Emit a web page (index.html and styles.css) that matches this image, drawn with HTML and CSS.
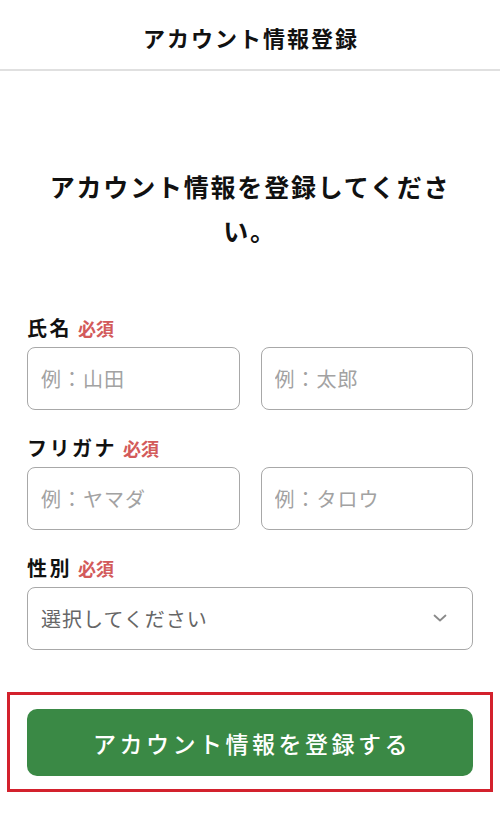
FILE: index.html
```html
<!DOCTYPE html>
<html lang="ja">
<head>
<meta charset="utf-8">
<title>アカウント情報登録</title>
<link rel="stylesheet" href="styles.css">
</head>
<body>
<header class="topbar">
  <h1 class="topbar-title">アカウント情報登録</h1>
</header>
<main class="page">
  <h2 class="lead">アカウント情報を登録してください。</h2>
  <form class="form">
    <div class="field">
      <div class="label">氏名<span class="req">必須</span></div>
      <div class="row">
        <input class="input" type="text" placeholder="例：山田">
        <input class="input" type="text" placeholder="例：太郎">
      </div>
    </div>
    <div class="field">
      <div class="label">フリガナ<span class="req">必須</span></div>
      <div class="row">
        <input class="input" type="text" placeholder="例：ヤマダ">
        <input class="input" type="text" placeholder="例：タロウ">
      </div>
    </div>
    <div class="field">
      <div class="label">性別<span class="req">必須</span></div>
      <div class="select">
        <span class="select-text">選択してください</span>
        <svg class="chev" width="14" height="8" viewBox="0 0 14 8"><path d="M1.5 1.5 L7 6.5 L12.5 1.5" fill="none" stroke="#8a8a8a" stroke-width="1.8" stroke-linecap="round" stroke-linejoin="round"/></svg>
      </div>
    </div>
    <div class="highlight">
      <button class="submit" type="button">アカウント情報を登録する</button>
    </div>
  </form>
</main>
</body>
</html>
```
FILE: styles.css
```css
* { box-sizing: border-box; }
html, body { margin: 0; padding: 0; background: #fff; }
body {
  font-family: "Noto Sans CJK JP", "Noto Sans", sans-serif;
  color: #111;
  width: 500px;
}
.topbar {
  height: 71px;
  border-bottom: 2px solid #e0e0e0;
  display: flex;
  align-items: center;
  justify-content: center;
}
.topbar-title {
  margin: 0;
  font-size: 22px;
  font-weight: 700;
  letter-spacing: 2px;
  line-height: 30px;
  padding-top: 4px;
  padding-left: 2px;
}
.page {
  padding: 0 27px;
}
.lead {
  margin: 93px 0 0;
  font-size: 25px;
  font-weight: 700;
  line-height: 44px;
  letter-spacing: 1.8px;
  text-align: center;
}
.form {
  margin-top: 64px;
  display: flex;
  flex-direction: column;
}
.field { margin-bottom: 26px; }
.label {
  font-size: 20px;
  font-weight: 700;
  line-height: 24px;
  letter-spacing: 2.5px;
  margin-bottom: 7px;
  display: flex;
  align-items: baseline;
}
.req {
  color: #d35a5a;
  font-size: 18px;
  margin-left: 6px;
  letter-spacing: 0;
}
.row {
  display: grid;
  grid-template-columns: 1fr 1fr;
  gap: 21px;
}
.input {
  height: 63px;
  width: 100%;
  border: 1.5px solid #a8a8a8;
  border-radius: 8px;
  padding: 0 13px;
  font-family: inherit;
  font-size: 20px;
  letter-spacing: 1px;
  color: #333;
  background: #fff;
  outline: none;
}
.input::placeholder { color: #a2a2a2; }
.select {
  height: 63px;
  border: 1.5px solid #a8a8a8;
  border-radius: 8px;
  padding: 0 25px 0 13px;
  display: flex;
  align-items: center;
  justify-content: space-between;
}
.select-text {
  font-size: 20px;
  letter-spacing: 1px;
  color: #666;
}
.chev { margin-top: -2px; }
.highlight {
  margin: 16px -20px 0;
  border: 3px solid #d3212d;
  padding: 14px 17px 13px;
}
.submit {
  display: block;
  width: 100%;
  height: 67px;
  border: none;
  border-radius: 10px;
  background: #3a8945;
  color: #fff;
  font-family: inherit;
  font-size: 23px;
  font-weight: 500;
  letter-spacing: 3.5px;
  padding: 0 0 0 4px;
}
```
